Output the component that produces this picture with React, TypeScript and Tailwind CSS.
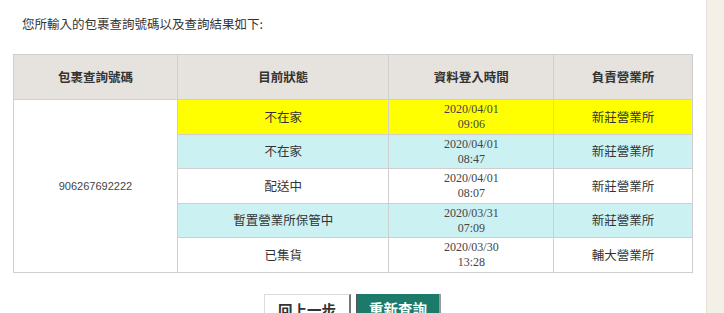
import React from "react";

const rows = [
  { status: "不在家", date: "2020/04/01", time: "09:06", office: "新莊營業所", bg: "bg-[#ffff00]", h: "h-[35px]" },
  { status: "不在家", date: "2020/04/01", time: "08:47", office: "新莊營業所", bg: "bg-[#ccf1f3]", h: "h-[34px]" },
  { status: "配送中", date: "2020/04/01", time: "08:07", office: "新莊營業所", bg: "bg-white", h: "h-[35px]" },
  { status: "暫置營業所保管中", date: "2020/03/31", time: "07:09", office: "新莊營業所", bg: "bg-[#ccf1f3]", h: "h-[34px]" },
  { status: "已集貨", date: "2020/03/30", time: "13:28", office: "輔大營業所", bg: "bg-white", h: "h-[35px]" },
];

const cjk = "font-['Microsoft_JhengHei','Noto_Sans_CJK_TC',sans-serif]";

export default function App() {
  return (
    <div className="flex w-[724px] h-[313px] overflow-hidden bg-white">
      <div className="w-[707px] shrink-0 border-r border-[#e4e0d8]">
        <div className={`pt-[15px] pl-[22px] text-[12.5px] leading-[18px] text-[#333] ${cjk}`}>
          您所輸入的包裹查詢號碼以及查詢結果如下:
        </div>
        <div className="pl-[13px] pt-[21px]">
          <table className={`border-collapse w-[680px] text-[#333] ${cjk}`}>
            <colgroup>
              <col className="w-[164px]" />
              <col className="w-[212px]" />
              <col className="w-[165px]" />
              <col className="w-[139px]" />
            </colgroup>
            <thead>
              <tr className="h-[45px] bg-[#e6e3de]">
                <th className="border border-[#cfcfcf] text-[12.5px] font-bold">包裹查詢號碼</th>
                <th className="border border-[#cfcfcf] text-[12.5px] font-bold">目前狀態</th>
                <th className="border border-[#cfcfcf] text-[12.5px] font-bold">資料登入時間</th>
                <th className="border border-[#cfcfcf] text-[12.5px] font-bold">負責營業所</th>
              </tr>
            </thead>
            <tbody>
              {rows.map((r, i) => (
                <tr key={i} className={r.h}>
                  {i === 0 && (
                    <td
                      rowSpan={5}
                      className="border border-[#cfcfcf] bg-white text-center text-[11px] text-[#444] font-['Liberation_Sans',sans-serif]"
                    >
                      906267692222
                    </td>
                  )}
                  <td className={`border border-[#cfcfcf] ${r.bg} text-center text-[12.5px]`}>{r.status}</td>
                  <td
                    className={`border border-[#cfcfcf] ${r.bg} text-center text-[12px] leading-[15px] text-[#444] font-['Liberation_Serif',serif]`}
                  >
                    <div>{r.date}</div>
                    <div>{r.time}</div>
                  </td>
                  <td className={`border border-[#cfcfcf] ${r.bg} text-center text-[12.5px]`}>{r.office}</td>
                </tr>
              ))}
            </tbody>
          </table>
        </div>
        <div className={`flex pl-[264px] pt-[21px] gap-[5px] ${cjk}`}>
          <div className="w-[87px] h-[28px] shrink-0 bg-white border-t border-l border-[#dcdcdc] border-r-2 border-r-[#777] flex items-start justify-center pt-[5px] text-[14.5px] font-bold text-[#333] leading-[20px]">
            回上一步
          </div>
          <div className="w-[85px] h-[28px] shrink-0 bg-[#1b7a69] border-l border-l-[#555] border-r-2 border-r-[#999] flex items-start justify-center pt-[5px] text-[14.5px] font-bold text-white leading-[20px]">
            重新查詢
          </div>
        </div>
      </div>
      <div className="flex-1 bg-[#f4f0e7]" />
    </div>
  );
}
